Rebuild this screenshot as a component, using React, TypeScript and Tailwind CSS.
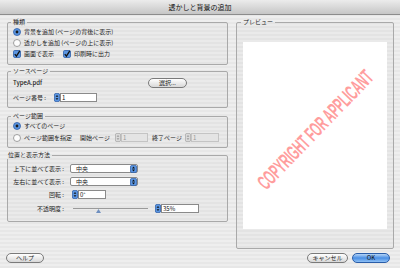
import type { ReactNode } from 'react';

function Radio({ on }: { on?: boolean }) {
  return (
    <svg width="8" height="8" viewBox="0 0 8 8" className="shrink-0">
      <circle cx="4" cy="4" r="3.5" fill={on ? '#5b96e2' : '#fdfdfd'} stroke={on ? '#2d5ea8' : '#8a8a8a'} strokeWidth="0.8" />
      {on && <circle cx="4" cy="4" r="1.4" fill="#1a1a1a" />}
    </svg>
  );
}

function Check() {
  return (
    <svg width="8" height="8" viewBox="0 0 8 8" className="shrink-0">
      <rect x="0.5" y="0.5" width="7" height="7" rx="1.2" fill="#5b96e2" stroke="#2d5ea8" strokeWidth="0.8" />
      <path d="M1.8 4.2 L3.4 6.2 L6.8 0.8" fill="none" stroke="#111" strokeWidth="1.3" />
    </svg>
  );
}

function Spin({ off }: { off?: boolean }) {
  return (
    <svg width="6" height="9" viewBox="0 0 6 9" className="shrink-0">
      <rect x="0.4" y="0.4" width="5.2" height="8.2" rx="1.5" fill={off ? '#dadada' : '#5b96e2'} stroke={off ? '#a8a8a8' : '#2d5ea8'} strokeWidth="0.8" />
      <path d="M1.6 3.8 L3 2 L4.4 3.8Z M1.6 5.2 L3 7 L4.4 5.2Z" fill={off ? '#9a9a9a' : '#111'} />
    </svg>
  );
}

function Field({ w, value, off }: { w: string; value: string; off?: boolean }) {
  return (
    <div className="flex items-center">
      <Spin off={off} />
      <div
        className={`${w} flex h-[9px] items-center border pl-[1px] text-[6px] leading-none ${
          off ? 'border-[#c4c4c4] bg-[#e4e4e4] text-[#9a9a9a]' : 'border-[#8a8a8a] bg-white text-[#111]'
        }`}
      >
        {value}
      </div>
    </div>
  );
}

function Popup({ value }: { value: string }) {
  return (
    <div className="flex h-[9px] w-[68px] items-center justify-between rounded-[2px] border border-[#8a8a8a] bg-white pl-[5px] text-[6px] leading-none">
      <span>{value}</span>
      <svg width="7" height="8" viewBox="0 0 7 8" className="shrink-0">
        <rect x="0.4" y="0.4" width="6.2" height="7.2" rx="1.5" fill="#5b96e2" stroke="#2d5ea8" strokeWidth="0.8" />
        <path d="M2 3.4 L3.5 1.6 L5 3.4Z M2 4.6 L3.5 6.4 L5 4.6Z" fill="#111" />
      </svg>
    </div>
  );
}

function Pill({ w, children, blue }: { w: string; children: ReactNode; blue?: boolean }) {
  return (
    <div
      className={`${w} flex h-[10px] items-center justify-center rounded-full border text-[6px] leading-none ${
        blue
          ? 'border-[#2a5da8] bg-linear-to-b from-[#b4d4f6] via-[#4a8fe4] to-[#8ec0f5] text-[#111]'
          : 'border-[#7a7a7a] bg-linear-to-b from-white to-[#d8d8d8] text-[#222]'
      }`}
    >
      {children}
    </div>
  );
}

function Group({ title, h, w, children, pad = 'pl-[5px]' }: { title: string; h: string; w?: string; children: ReactNode; pad?: string }) {
  return (
    <fieldset className={`${h} ${w ?? ''} ${pad} rounded-[2px] border border-[#a9a9a9] bg-black/[0.015]`}>
      <legend className="-ml-[2px] px-[2px] text-[6px] leading-[8px] text-[#222]">{title}</legend>
      {children}
    </fieldset>
  );
}

export default function App() {
  return (
    <div className="h-[268px] w-[400px] overflow-hidden bg-[repeating-linear-gradient(180deg,#eeeeee_0px,#eeeeee_2px,#e7e7e7_2px,#e7e7e7_4px)] font-['Noto_Sans_CJK_JP','Noto_Sans',sans-serif] text-[#222]">
      <div className="flex h-[15px] items-center justify-center border-b border-[#8c8c8c] bg-linear-to-b from-[#ececec] to-[#c6c6c6] text-[7px] leading-none text-[#111]">
        透かしと背景の追加
      </div>

      <div className="flex pt-[3px]">
        <div className="ml-[7px] flex w-[221px] flex-col">
          <Group title="種類" h="h-[47px]">
            <div className="flex h-[11px] items-center gap-[3px] pt-[1px] text-[6px] leading-none">
              <Radio on />
              <span>背景を追加 (ページの背後に表示)</span>
            </div>
            <div className="flex h-[11px] items-center gap-[3px] text-[6px] leading-none">
              <Radio />
              <span>透かしを追加 (ページの上に表示)</span>
            </div>
            <div className="flex h-[11px] items-center text-[6px] leading-none">
              <Check />
              <span className="ml-[3px] w-[39px]">画面で表示</span>
              <Check />
              <span className="ml-[3px]">印刷時に出力</span>
            </div>
          </Group>

          <div className="mt-[2px]">
            <Group title="ソースページ" h="h-[41px]">
              <div className="flex h-[15px] items-center text-[6px] leading-none">
                <span className="w-[135px] font-medium">TypeA.pdf</span>
                <Pill w="w-[39px]">選択...</Pill>
              </div>
              <div className="flex h-[15px] items-center text-[6px] leading-none">
                <span className="w-[41px]">ページ番号 :</span>
                <Field w="w-[37px]" value="1" />
              </div>
            </Group>
          </div>

          <div className="mt-[4px]">
            <Group title="ページ範囲" h="h-[36px]">
              <div className="flex h-[11px] items-center gap-[3px] text-[6px] leading-none">
                <Radio on />
                <span>すべてのページ</span>
              </div>
              <div className="flex h-[13px] items-center text-[6px] leading-none">
                <Radio />
                <span className="ml-[3px] w-[56px]">ページ範囲を指定</span>
                <span className="w-[35px]">開始ページ</span>
                <Field w="w-[27px]" value="1" off />
                <span className="ml-[4px] w-[33px]">終了ページ</span>
                <Field w="w-[28px]" value="1" off />
              </div>
            </Group>
          </div>

          <div className="mt-[3px]">
            <Group title="位置と表示方法" h="h-[71px]" pad="pl-0">
              <div className="pt-[3px] text-[6px] leading-none">
                <div className="flex h-[13px] items-center">
                  <span className="w-[56px] text-right">上下に並べて表示 :</span>
                  <div className="ml-[6px]">
                    <Popup value="中央" />
                  </div>
                </div>
                <div className="flex h-[13px] items-center">
                  <span className="w-[56px] text-right">左右に並べて表示 :</span>
                  <div className="ml-[6px]">
                    <Popup value="中央" />
                  </div>
                </div>
                <div className="flex h-[13px] items-center">
                  <span className="w-[56px] text-right">回転 :</span>
                  <div className="ml-[8px]">
                    <Field w="w-[28px]" value="0°" />
                  </div>
                </div>
                <div className="flex h-[15px] items-center">
                  <span className="w-[56px] text-right">不透明度 :</span>
                  <div className="relative ml-[9px] h-px w-[75px] bg-[#9a9a9a]">
                    <svg width="5" height="4" viewBox="0 0 5 4" className="absolute left-[23px] top-[1px]">
                      <path d="M2.5 0 L5 4 L0 4Z" fill="#6f8fbf" />
                    </svg>
                  </div>
                  <div className="ml-[7px]">
                    <Field w="w-[38px]" value="35%" />
                  </div>
                </div>
              </div>
            </Group>
          </div>
        </div>

        <div className="ml-[8px] w-[158px]">
          <Group title="プレビュー" h="h-[231px]" pad="pl-[6px]">
            <div className="mt-[16px] flex h-[187px] w-[144px] items-center justify-center overflow-hidden bg-white">
              <span className="-translate-y-[6px] -rotate-[46deg] scale-x-[0.52] whitespace-nowrap font-['Liberation_Sans',sans-serif] text-[21px] font-bold leading-none text-[#ff9d9d]">
                COPYRIGHT FOR APPLICANT
              </span>
            </div>
          </Group>
        </div>
      </div>

      <div className="mt-[4px] flex items-center">
        <div className="ml-[6px]">
          <Pill w="w-[38px]">ヘルプ</Pill>
        </div>
        <div className="ml-auto mr-[10px] flex gap-[4px]">
          <Pill w="w-[41px]">キャンセル</Pill>
          <Pill w="w-[38px]" blue>
            OK
          </Pill>
        </div>
      </div>
    </div>
  );
}
